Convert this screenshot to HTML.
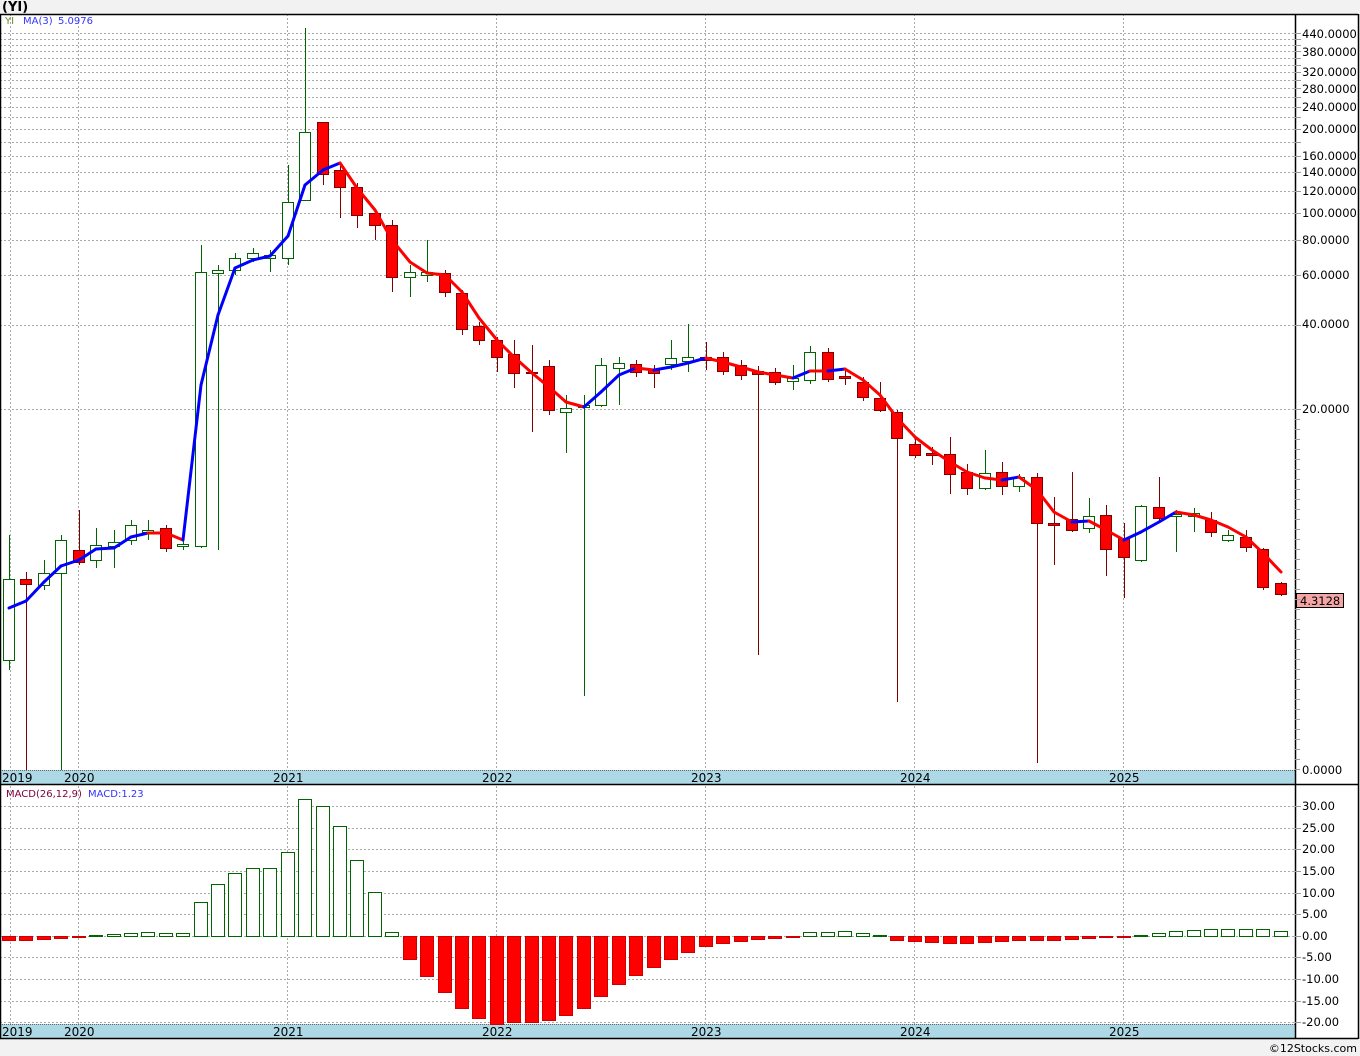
<!DOCTYPE html>
<html><head><meta charset="utf-8"><style>
html,body{margin:0;padding:0;background:#fff;width:1360px;height:1056px;overflow:hidden}
svg{display:block;font-family:"DejaVu Sans","Liberation Sans",sans-serif}
</style></head><body>
<svg id="s" width="1360" height="1056" viewBox="0 0 1360 1056" xmlns="http://www.w3.org/2000/svg">
<rect x="0" y="0" width="1360" height="1056" fill="#f2f2f2"/>
<rect x="0" y="14" width="1358" height="1025" fill="#fff"/>
<text x="2" y="11" font-size="13" font-weight="bold" fill="#000">(YI)</text>
<g id="grid" stroke="#aaa" stroke-dasharray="2,2" stroke-width="1"></g>
<rect x="0" y="770" width="1295" height="14" fill="#add8e6"/>
<rect x="0" y="1024" width="1295" height="14" fill="#add8e6"/>
<line x1="0" y1="770.5" x2="1295" y2="770.5" stroke="#666" stroke-dasharray="1,1"/>
<line x1="0" y1="1024.5" x2="1295" y2="1024.5" stroke="#666" stroke-dasharray="1,1"/>
<g font-size="12" fill="#000">
<text x="2" y="782">2019</text><text x="64" y="782">2020</text><text x="273" y="782">2021</text><text x="482" y="782">2022</text><text x="691" y="782">2023</text><text x="900" y="782">2024</text><text x="1109" y="782">2025</text>
<text x="2" y="1036">2019</text><text x="64" y="1036">2020</text><text x="273" y="1036">2021</text><text x="482" y="1036">2022</text><text x="691" y="1036">2023</text><text x="900" y="1036">2024</text><text x="1109" y="1036">2025</text>
</g>
<g id="chart"></g>
<g font-size="10">
<text x="5" y="24" fill="#6b8e23">YI</text><text x="23" y="24" fill="#3333ff">MA(3)</text><text x="58" y="24" fill="#3333ff">5.0976</text>
<text x="6" y="797" fill="#800040">MACD(26,12,9)</text><text x="88" y="797" fill="#3333ff">MACD:1.23</text>
</g>
<g font-size="11.5" fill="#000">
<text x="1302" y="38">440.0000</text><text x="1302" y="56">380.0000</text><text x="1302" y="76">320.0000</text><text x="1302" y="93">280.0000</text><text x="1302" y="111">240.0000</text><text x="1302" y="133">200.0000</text><text x="1302" y="160">160.0000</text><text x="1302" y="176">140.0000</text><text x="1302" y="195">120.0000</text><text x="1302" y="217">100.0000</text><text x="1302" y="244">80.0000</text><text x="1302" y="279">60.0000</text><text x="1302" y="328">40.0000</text><text x="1302" y="413">20.0000</text><text x="1302" y="774">0.0000</text>
<text x="1302" y="810">30.00</text><text x="1302" y="832">25.00</text><text x="1302" y="853">20.00</text><text x="1302" y="875">15.00</text><text x="1302" y="897">10.00</text><text x="1302" y="918">5.00</text><text x="1302" y="940">0.00</text><text x="1302" y="961">-5.00</text><text x="1302" y="983">-10.00</text><text x="1302" y="1005">-15.00</text><text x="1302" y="1026">-20.00</text>
</g>
<rect x="1296.5" y="593.5" width="47" height="14" fill="#f4a6a6" stroke="#000"/>
<text x="1300" y="605" font-size="11.5" fill="#000">4.3128</text>
<g stroke="#000" stroke-width="1.5" fill="none">
<line x1="0" y1="14.5" x2="1358" y2="14.5"/>
<line x1="1295.5" y1="14" x2="1295.5" y2="1039"/>
<line x1="1358.5" y1="14" x2="1358.5" y2="1039"/>
<line x1="0" y1="784.5" x2="1358" y2="784.5"/>
<line x1="0" y1="1038.5" x2="1358" y2="1038.5"/>
<line x1="0.5" y1="14" x2="0.5" y2="1039"/>
</g>
<text x="1357" y="1052" font-size="11" fill="#000" text-anchor="end">©12Stocks.com</text>
</svg>
<script>
var NS="http://www.w3.org/2000/svg";
function el(p,t,a){var e=document.createElementNS(NS,t);for(var k in a)e.setAttribute(k,a[k]);p.appendChild(e);return e;}
var G=document.getElementById("grid"),C=document.getElementById("chart"),S=document.getElementById("s");
var hy=[409,324.7,275.4,240.4,213.3,191.1,172.4,156.1,141.8,129,117.4,106.8,97.1,88.1,79.7,71.9,64.5,57.6,51,44.7,38.8,33.1];
hy.forEach(function(y){y=Math.round(y)+.5;el(G,"line",{x1:0,y1:y,x2:1295,y2:y});el(S,"line",{x1:1295,y1:y,x2:1301,y2:y,stroke:"#999"});});
[10,78,287,496,705,914,1123].forEach(function(x){el(G,"line",{x1:x+.5,y1:14,x2:x+.5,y2:1038});});
[806,828,849,871,893,914,936,957,979,1001,1022].forEach(function(y){el(G,"line",{x1:0,y1:y+.5,x2:1295,y2:y+.5});el(S,"line",{x1:1295,y1:y+.5,x2:1301,y2:y+.5,stroke:"#999"});});
for(var y=419;y<770;y+=10)el(S,"line",{x1:1295,y1:y+.5,x2:1300,y2:y+.5,stroke:"#999"});
var c=[["g",579,660,535,670],["r",579,584,572,770],["g",573,585,560,590],["g",540,573,535,770],["r",550,562,510,565],["g",545,560,528,568],["g",542,546,530,568],["g",525,540,520,545],["g",530,532,520,540],["r",528,548,525,552],["g",544,546,538,550],["g",272,546,245,548],["g",270,273,265,550],["g",258,270,253,275],["g",253,258,248,262],["g",255,258,250,272],["g",202,258,165,265],["g",132,200,28,200],["r",122,174,122,185],["r",170,187,162,218],["r",187,215,183,228],["r",213,225,210,240],["r",225,277,220,292],["g",272,277,265,297],["g",272,275,240,282],["r",273,292,270,297],["r",293,329,290,335],["r",326,340,322,345],["r",340,357,337,372],["r",354,373,340,388],["r",372,373,345,432],["r",366,410,360,415],["g",408,412,395,453],["g",405,407,395,696],["g",365,405,358,407],["g",363,368,357,405],["r",364,372,360,377],["r",370,373,365,388],["g",358,364,340,370],["g",357,361,324,372],["r",357,360,342,370],["r",357,371,352,375],["r",365,375,360,380],["r",371,374,366,655],["r",372,382,368,385],["g",378,381,365,390],["g",352,380,346,384],["r",352,379,348,382],["r",376,378,370,385],["r",382,397,377,401],["r",398,410,382,412],["r",412,438,410,702],["r",444,455,437,458],["r",453,455,447,465],["r",454,474,437,494],["r",472,488,464,495],["g",473,488,450,490],["r",472,486,462,495],["g",477,486,474,492],["r",477,523,473,763],["r",523,525,497,565],["r",519,530,472,532],["g",516,528,498,533],["r",515,549,505,576],["r",538,557,523,598],["g",506,560,505,562],["r",507,518,477,522],["g",514,516,510,552],["g",513,516,508,532],["r",520,532,512,537],["g",535,540,530,542],["r",537,547,530,552],["r",549,587,548,590],["r",583,594,582,596]];
var m=[940,940,939,938,936,935,934,933,932,933,933,902,884,873,868,868,852,799,806,826,860,892,932,959,976,992,1008,1018,1024,1022,1022,1020,1015,1008,996,984,975,967,959,952,946,943,941,939,938,937,932,932,931,933,935,940,941,942,943,943,942,941,940,940,940,939,938,937,936,935,933,931,930,929,929,929,929,931];
function X(i){return Math.round(9+17.42*i);}
c.forEach(function(d,i){var x=X(i),g=d[0]=="g",col=g?"#006400":"#800000";
el(C,"line",{x1:x+.5,y1:d[3],x2:x+.5,y2:d[4],stroke:col});
el(C,"rect",{x:x-5.5,y:d[1]+.5,width:11,height:Math.max(d[2]-d[1],1),fill:g?"#fff":"#f00",stroke:g?"#006400":"#800000"});});
m.forEach(function(v,i){var x=X(i),g=v<936;
el(C,"rect",{x:x-6.5,y:(g?v:936)+.5,width:13,height:Math.max(Math.abs(936-v),1),fill:g?"#fff":"#f00",stroke:g?"#006400":"#c00"});});
var ma=[608,601,582,566,560,549,548,537,533,533,540,385,315,268,260,256,236,185,170,163,188,210,240,262,273,275,292,318,340,357,373,387,402,407,392,375,368,370,367,363,358,362,367,372,375,378,371,371,369,380,395,418,437,450,462,472,478,480,477,490,512,522,521,530,540,532,522,512,515,520,527,537,553,572];
for(var i=1;i<ma.length;i++){el(C,"line",{x1:X(i-1),y1:ma[i-1],x2:X(i),y2:ma[i],stroke:ma[i]<ma[i-1]?"#0000ff":"#ff0000","stroke-width":3,"stroke-linecap":"round"});}
</script>
</body></html>
